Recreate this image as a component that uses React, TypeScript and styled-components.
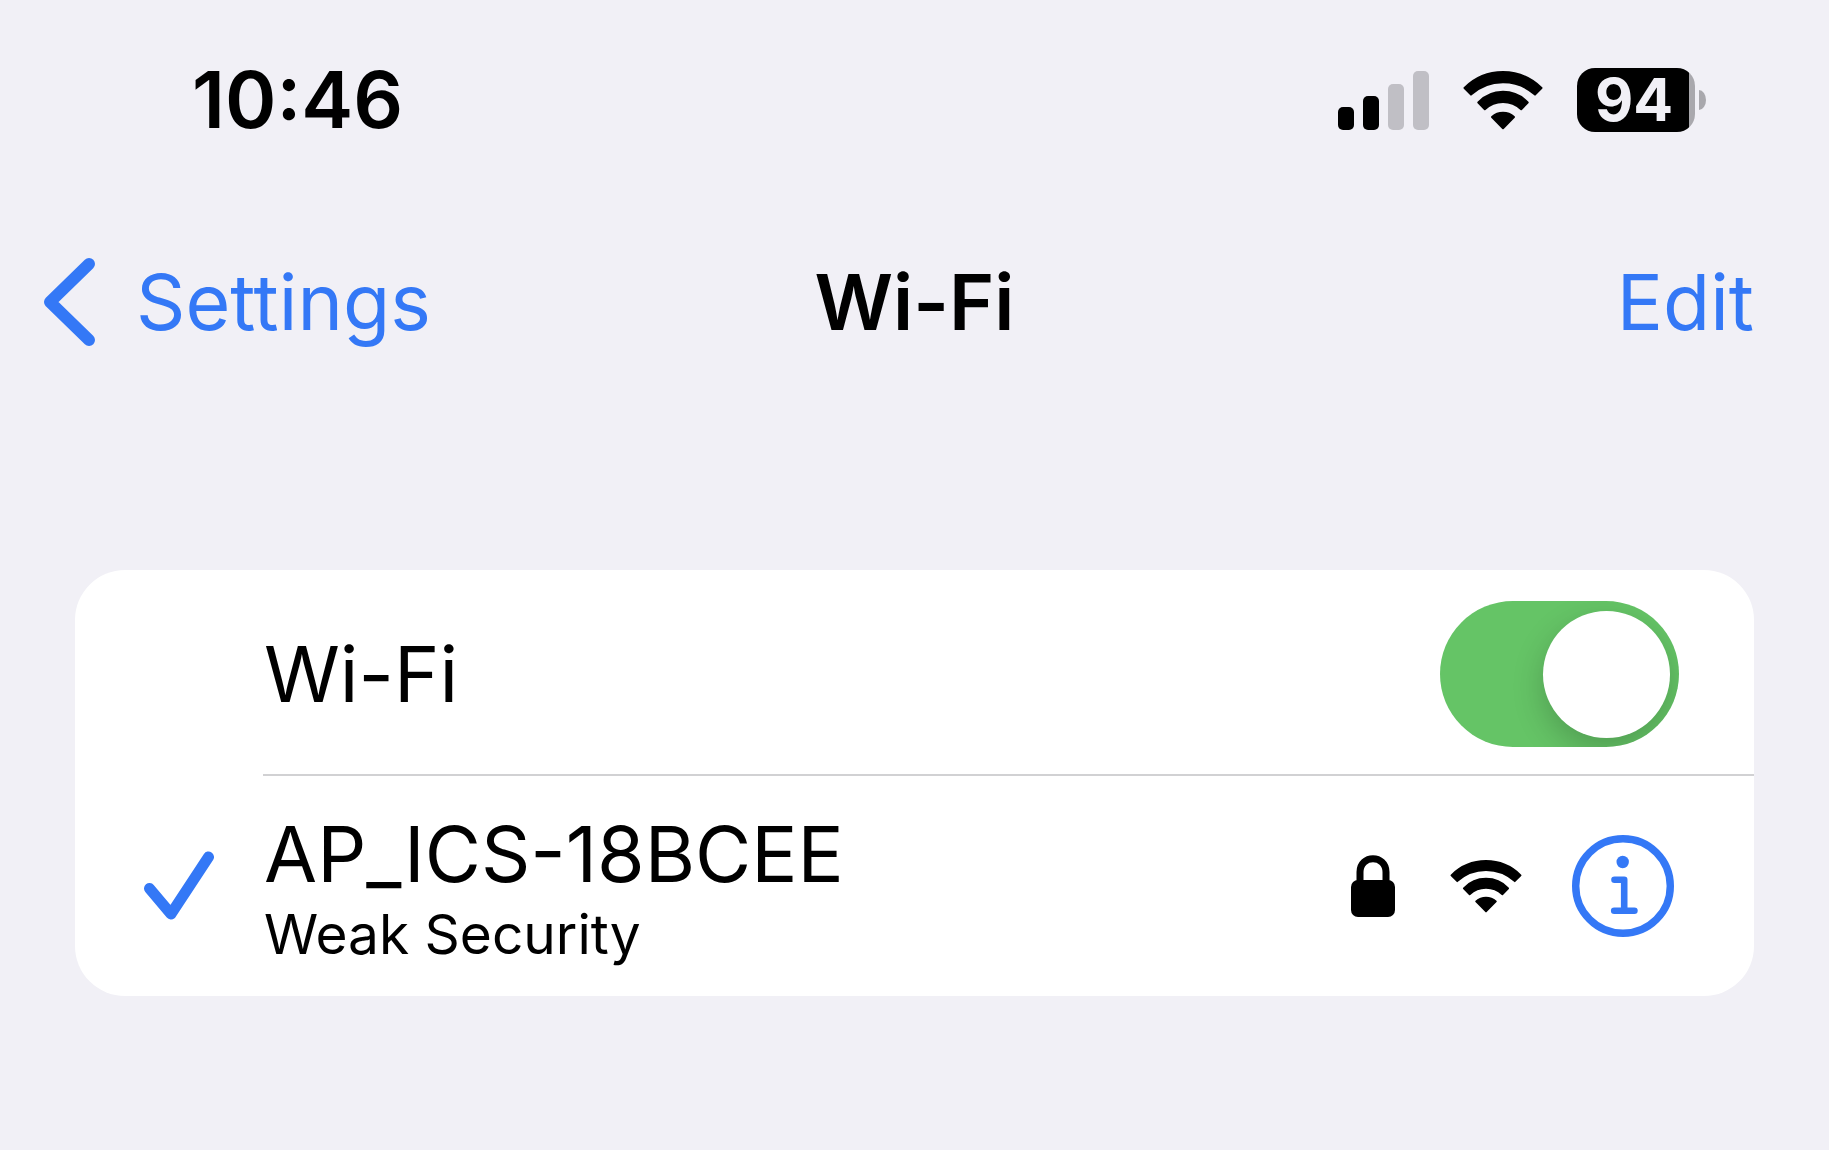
import React, { useState } from "react";
import styled, { createGlobalStyle } from "styled-components";

const blue = "#3478f6";
const canvas = "#f1f0f6";

const GlobalStyle = createGlobalStyle`
  * { box-sizing: border-box; }
  body {
    margin: 0;
    background: ${canvas};
    color: #000;
    font-family: Inter, "Liberation Sans", sans-serif;
    font-size: 77px;
    line-height: 96px;
  }
  svg { display: block; flex: none; }
`;

const StatusBar = styled.header`
  display: flex;
  align-items: center;
  justify-content: space-between;
  height: 66px;
  margin-top: 67px;
  padding: 0 123px 0 192px;
`;

const Clock = styled.time`
  font-size: 78px;
  font-weight: 600;
  line-height: 98px;
`;

const StatusIcons = styled.div`
  display: flex;
  align-items: center;
  gap: 34px;
`;

const Battery = styled.div`
  display: flex;
  align-items: center;
  gap: 4px;
`;

const BatteryBody = styled.div`
  width: 118px;
  height: 64px;
  padding-right: 4px;
  border-radius: 18px;
  background: linear-gradient(to right, #000 112px, #a9a8ad 112px);
  color: ${canvas};
  font-size: 59px;
  font-weight: 700;
  line-height: 64px;
  text-align: center;
`;

const BatteryTip = styled.div`
  width: 7px;
  height: 20px;
  border-radius: 0 7px 7px 0 / 0 10px 10px 0;
  background: #a9a8ad;
`;

const NavBar = styled.nav`
  display: grid;
  grid-template-columns: 1fr auto 1fr;
  align-items: center;
  margin-top: 121px;
  padding: 0 43px;
`;

const NavLink = styled.a<{ $end?: boolean }>`
  display: flex;
  align-items: center;
  gap: 41px;
  justify-self: ${(p) => (p.$end ? "end" : "start")};
  padding-right: ${(p) => (p.$end ? 32 : 0)}px;
  color: ${blue};
  text-decoration: none;
`;

const Title = styled.h1`
  margin: 0;
  font-size: 77px;
  font-weight: 600;
`;

const Card = styled.main`
  margin: 220px 75px 0;
  border-radius: 50px;
  background: #fff;
`;

const Row = styled.section`
  display: flex;
  align-items: center;
  padding-left: 68px;
`;

const Leading = styled.div`
  flex: none;
  width: 120px;
`;

const RowBody = styled.div<{ $divided?: boolean; $inset: number }>`
  flex: 1;
  display: flex;
  align-items: center;
  justify-content: space-between;
  min-height: ${(p) => (p.$divided ? 206 : 220)}px;
  padding: ${(p) => (p.$divided ? 4 : 0)}px ${(p) => p.$inset}px 0 1px;
  border-bottom: ${(p) => (p.$divided ? "2px solid #d1d1d3" : "none")};
`;

const RowLabel = styled.label`
  flex: 1;
`;

const NetworkName = styled.div``;

const NetworkNote = styled.div`
  font-size: 55px;
  line-height: 64px;
`;

const Accessories = styled.div`
  display: flex;
  align-items: center;
`;

const Toggle = styled.input`
  appearance: none;
  display: flex;
  align-items: center;
  justify-content: flex-start;
  flex: none;
  width: 239px;
  height: 146px;
  margin: 0;
  padding: 0 9px;
  border-radius: 73px;
  background: #e9e9eb;
  overflow: hidden;
  cursor: pointer;

  &::before {
    content: "";
    width: 127px;
    height: 127px;
    border-radius: 50%;
    background: #fff;
    box-shadow: 0 12px 32px rgba(0, 0, 0, 0.2);
  }
  &:checked {
    justify-content: flex-end;
    background: #65c466;
  }
`;

const IconButton = styled.button`
  margin: 0 0 0 50px;
  padding: 0;
  border: 0;
  background: none;
  cursor: pointer;
`;

const LockWrap = styled.span`
  margin-right: 55px;
`;

const Signal = () => (
  <svg width="91" height="59" viewBox="0 0 91 59" role="img" aria-label="Signal">
    <rect x="0" y="36" width="16" height="23" rx="5" />
    <rect x="25" y="25" width="16" height="34" rx="5" />
    <rect x="50" y="13" width="16" height="46" rx="5" fill="#c0bfc5" />
    <rect x="75" y="0" width="16" height="59" rx="5" fill="#c0bfc5" />
  </svg>
);

const Wifi = ({ width, height }: { width: number; height: number }) => (
  <svg width={width} height={height} viewBox="0 0 80 59" role="img" aria-label="Wi-Fi signal">
    <g stroke="#000" strokeWidth="2" strokeLinejoin="round">
      <path d="M1.5 17A54.6 54.6 0 0 1 78.5 17L72 23.6A47.6 47.6 0 0 0 8 23.6Z" />
      <path d="M15.3 31.5A34 34 0 0 1 64.7 31.5L58.2 38.2A26.3 26.3 0 0 0 21.8 38.2Z" />
      <path d="M29 46A16.5 16.5 0 0 1 51 46L40 57.3Z" />
    </g>
  </svg>
);

const Chevron = () => (
  <svg width="52" height="90" viewBox="0 0 52 90" aria-hidden="true">
    <path d="M46 7L7 45L46 83" fill="none" stroke={blue} strokeWidth="12" strokeLinecap="round" strokeLinejoin="round" />
  </svg>
);

const Check = () => (
  <svg width="71" height="70" viewBox="0 0 71 70" role="img" aria-label="Connected">
    <path d="M6.5 37.5L28 63L65.5 6" fill="none" stroke={blue} strokeWidth="11" strokeLinecap="round" strokeLinejoin="round" />
  </svg>
);

const Lock = () => (
  <svg width="44" height="63" viewBox="0 0 44 63" role="img" aria-label="Secured">
    <rect x="0" y="25" width="44" height="37" rx="7" />
    <path d="M9 28V17C9 -0.7 35 -0.7 35 17V28" fill="none" stroke="#000" strokeWidth="7" />
  </svg>
);

const Info = () => (
  <svg width="102" height="102" viewBox="0 0 102 102" aria-hidden="true">
    <circle cx="51" cy="51" r="47.3" fill="none" stroke={blue} strokeWidth="7.4" />
    <circle cx="50.7" cy="27" r="6.2" fill={blue} />
    <g fill="none" stroke={blue} strokeLinecap="round" strokeLinejoin="round">
      <path d="M42.5 44.7H52.2V75.5" strokeWidth="6.6" />
      <path d="M42.2 75.8H62.4" strokeWidth="6.6" />
    </g>
  </svg>
);

export default function App() {
  const [on, setOn] = useState(true);
  return (
    <>
      <GlobalStyle />
      <StatusBar>
        <Clock>10:46</Clock>
        <StatusIcons>
          <Signal />
          <Wifi width={80} height={59} />
          <Battery>
            <BatteryBody>94</BatteryBody>
            <BatteryTip />
          </Battery>
        </StatusIcons>
      </StatusBar>
      <NavBar>
        <NavLink href="#settings">
          <Chevron />
          Settings
        </NavLink>
        <Title>Wi-Fi</Title>
        <NavLink href="#edit" $end>
          Edit
        </NavLink>
      </NavBar>
      <Card>
        <Row>
          <Leading />
          <RowBody $divided $inset={75}>
            <RowLabel htmlFor="wifi">Wi-Fi</RowLabel>
            <Toggle id="wifi" type="checkbox" role="switch" checked={on} onChange={(e) => setOn(e.target.checked)} />
          </RowBody>
        </Row>
        <Row>
          <Leading>
            <Check />
          </Leading>
          <RowBody $inset={80}>
            <div>
              <NetworkName>AP_ICS-18BCEE</NetworkName>
              <NetworkNote>Weak Security</NetworkNote>
            </div>
            <Accessories>
              <LockWrap>
                <Lock />
              </LockWrap>
              <Wifi width={72} height={53} />
              <IconButton type="button" aria-label="Network details">
                <Info />
              </IconButton>
            </Accessories>
          </RowBody>
        </Row>
      </Card>
    </>
  );
}
